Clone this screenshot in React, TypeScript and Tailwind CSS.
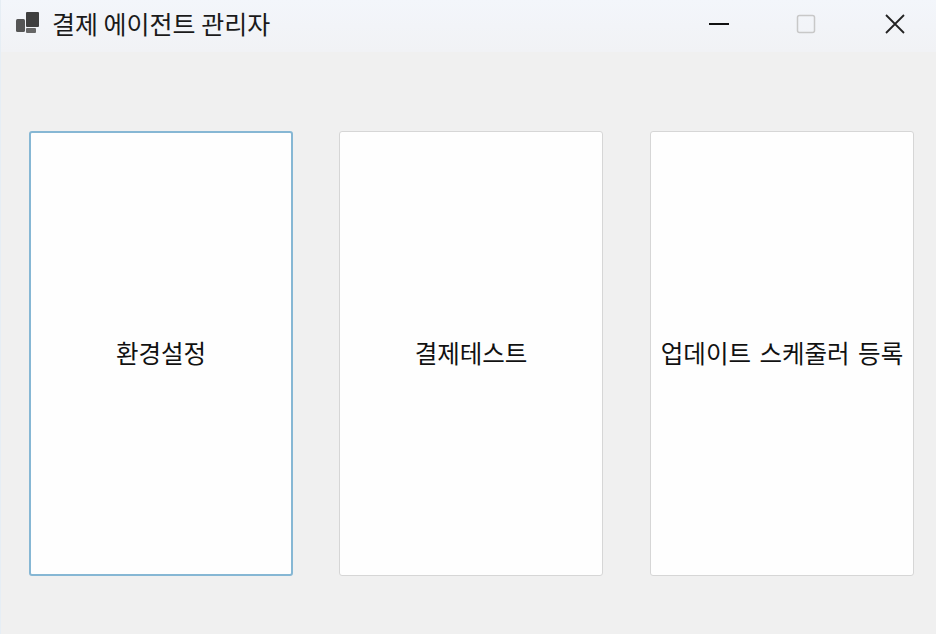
import React from 'react';

const font = { fontFamily: '"Noto Sans CJK KR", sans-serif' };

const AppIcon = () => (
  <svg width="26" height="24" viewBox="0 0 26 24" fill="#3f3f3f">
    <rect x="2" y="7" width="9" height="13" rx="1.5" fill="#555" />
    <rect x="12" y="0" width="13" height="15" rx="1" />
    <rect x="12" y="16" width="10" height="5" rx="1" fill="#666" />
  </svg>
);

const Card: React.FC<{ label: string; active?: boolean }> = ({ label, active }) => (
  <button
    className={
      active
        ? 'h-[445px] w-[264px] rounded-[3px] border-2 border-[#86b7d4] bg-[#fefefe] text-center text-[24.5px] [word-spacing:3px] whitespace-nowrap text-[#111]'
        : 'h-[445px] w-[264px] rounded-[3px] border border-[#d6d6d6] bg-[#fefefe] text-center text-[24.5px] [word-spacing:3px] whitespace-nowrap text-[#111]'
    }
  >
    {label}
  </button>
);

const App: React.FC = () => {
  return (
    <div className="flex h-[634px] w-[936px] flex-col overflow-hidden border-l border-[#e6eef5] bg-[#f0f0f0]" style={font}>
      <div className="flex h-[52px] items-center bg-gradient-to-b from-[#f3f6fb] to-[#f1f2f5] pb-[4px] pl-[13px]">
        <AppIcon />
        <span className="ml-[12px] text-[25px] text-[#1a1a1a]">결제 에이전트 관리자</span>
        <div className="ml-auto flex items-center">
          <svg width="20" height="20" viewBox="0 0 20 20" className="mr-[67px]">
            <path d="M0 10H20" stroke="#111" strokeWidth="2" />
          </svg>
          <svg width="20" height="20" viewBox="0 0 20 20" className="mr-[68px]">
            <rect x="1.5" y="1.5" width="17" height="17" rx="2" fill="none" stroke="#c8c8c8" strokeWidth="1.5" />
          </svg>
          <svg width="22" height="22" viewBox="0 0 22 22" className="mr-[30px]">
            <path d="M2 2L20 20M20 2L2 20" stroke="#222" strokeWidth="1.8" />
          </svg>
        </div>
      </div>
      <div className="flex gap-[46px] pt-[79px] pl-[28px]">
        <Card label="환경설정" active />
        <Card label="결제테스트" />
        <div className="ml-px">
          <Card label="업데이트 스케줄러 등록" />
        </div>
      </div>
    </div>
  );
};

export default App;
